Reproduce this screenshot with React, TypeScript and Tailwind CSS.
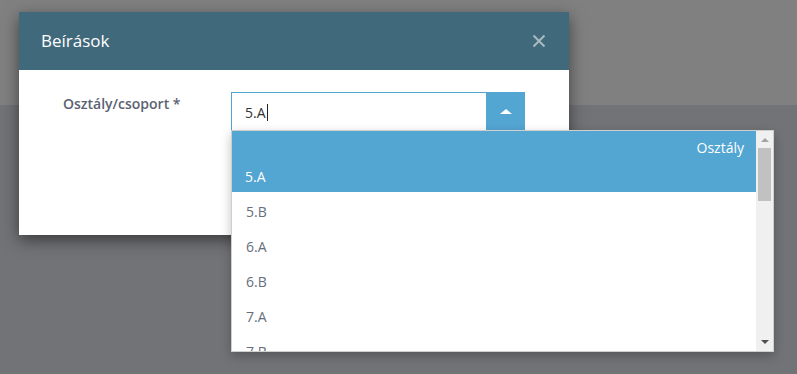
const options = ["5.B", "6.A", "6.B", "7.A", "7.B"];

function CloseIcon() {
  return (
    <svg width="14" height="14" viewBox="0 0 14 14" className="text-[#a9b9c2]">
      <path d="M1.5 1.5 L12.5 12.5 M12.5 1.5 L1.5 12.5" stroke="currentColor" strokeWidth="2" />
    </svg>
  );
}

function ClassDropdown() {
  return (
    <div className="absolute left-[231px] top-[130px] flex h-[222px] w-[543px] border border-[#cfcfcf] bg-white shadow-[0_4px_10px_rgba(0,0,0,0.25)]">
      <div className="flex-1 overflow-hidden">
        <div className="bg-[#53a5d2] text-white">
          <div className="flex h-[29px] items-center justify-end pt-[3px] pr-[12px]">Osztály</div>
          <div className="flex h-[32px] items-center pl-[13px]">5.A</div>
        </div>
        {options.map((o) => (
          <div key={o} className="flex h-[35px] items-center pt-1 pl-[14px] text-[#666e7b]">
            {o}
          </div>
        ))}
      </div>
      <div className="flex w-[17px] flex-col items-center bg-[#f0f0f0]">
        <div className="mt-[7px] h-0 w-0 border-x-[4px] border-b-[4px] border-x-transparent border-b-[#a3a3a3]" />
        <div className="mt-[6px] h-[53px] w-[13px] bg-[#c1c1c1]" />
        <div className="flex-1" />
        <div className="mb-[7px] h-0 w-0 border-x-[4px] border-t-[4px] border-x-transparent border-t-[#505050]" />
      </div>
    </div>
  );
}

export default function App() {
  return (
    <div
      className="relative flex h-[374px] w-[797px] flex-col overflow-hidden text-[14px]"
      style={{ fontFamily: '"Open Sans", "Noto Sans", sans-serif' }}
    >
      <div className="h-[105px] bg-[#808080]" />
      <div className="flex-1 bg-[#727376]" />

      <div className="absolute left-[19px] top-[12px] flex h-[223px] w-[550px] flex-col bg-white shadow-[0_5px_15px_rgba(0,0,0,0.5)]">
        <div className="flex h-[58px] items-center justify-between bg-[#41697c] pl-[22px] pr-[23px]">
          <h2 className="text-[17px] text-white">Beírások</h2>
          <CloseIcon />
        </div>
        <div className="flex pl-[44px] pt-[22px]">
          <label className="w-[168px] pt-[1px] font-semibold text-[#5b6272]">Osztály/csoport *</label>
          <div className="flex h-[38px] w-[294px]">
            <div className="flex flex-1 items-center border-t border-l border-[#52a4d2] pl-[13px] pt-[2px] text-[#333]">
              5.A<span className="ml-px inline-block h-[17px] w-px bg-[#222]" />
            </div>
            <div className="flex w-[39px] items-center justify-center bg-[#53a5d2]">
              <div className="h-0 w-0 border-x-[6px] border-b-[5px] border-x-transparent border-b-white" />
            </div>
          </div>
        </div>
      </div>

      <ClassDropdown />
    </div>
  );
}
